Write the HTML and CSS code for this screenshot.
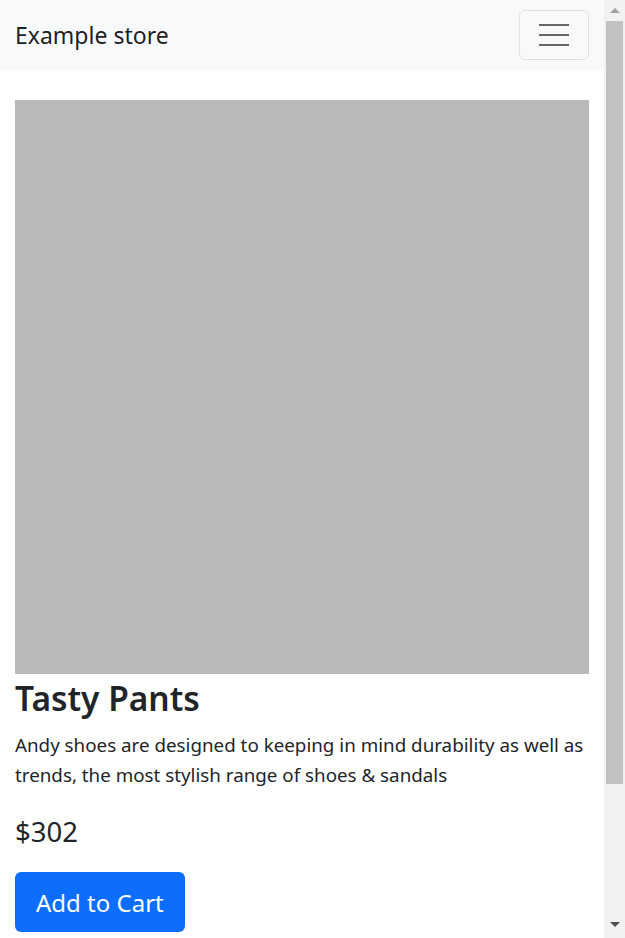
FILE: index.html
```html
<!DOCTYPE html>
<html lang="en">
<head>
  <meta charset="UTF-8" />
  <title>Example store</title>
  <meta name="viewport" content="width=device-width, initial-scale=1.0" />
  <link rel="stylesheet" href="styles.css">
</head>
<body>
  <nav class="navbar">
    <a class="brand" href="#">Example store</a>
    <button class="toggler" type="button" aria-label="Toggle navigation">
      <span class="toggler-icon"></span>
    </button>
  </nav>

  <main class="container">
    <div class="product-img"></div>
    <h1 class="title">Tasty Pants</h1>
    <p class="desc">Andy shoes are designed to keeping in mind durability as well as trends, the most stylish range of shoes &amp; sandals</p>
    <p class="price">$302</p>
    <button class="btn-cart" type="button">Add to Cart</button>
  </main>

  <!-- window scrollbar -->
  <div class="scrollbar" aria-hidden="true">
    <span class="arrow up"></span>
    <span class="thumb"></span>
    <span class="arrow down"></span>
  </div>
</body>
</html>
```

FILE: styles.css
```css
* {
  box-sizing: border-box;
}

body {
  margin: 0 21px 0 0;
  font-family: "Noto Sans", "Open Sans", sans-serif;
  color: #212529;
  background: #fff;
}

.navbar {
  display: flex;
  align-items: center;
  justify-content: space-between;
  height: 70px;
  padding: 0 15px;
  background-color: #f8f9fa;
}

.brand {
  font-size: 23px;
  color: rgba(0, 0, 0, 0.9);
  text-decoration: none;
}

.toggler {
  width: 70px;
  height: 50px;
  border: 1px solid rgba(0, 0, 0, 0.1);
  border-radius: 6px;
  background: transparent;
  display: flex;
  align-items: center;
  justify-content: center;
  padding: 0;
}

.toggler-icon {
  display: block;
  width: 30px;
  height: 22px;
  background:
    linear-gradient(#666, #666) 0 0 / 100% 2px no-repeat,
    linear-gradient(#666, #666) 0 10px / 100% 2px no-repeat,
    linear-gradient(#666, #666) 0 20px / 100% 2px no-repeat;
}

.container {
  padding: 30px 15px 175px;
}

.product-img {
  height: 574px;
  background: #bababa;
}

.title {
  margin: 4px 0 12px;
  font-size: 33.5px;
  font-weight: 600;
  line-height: 1.2;
}

.desc {
  margin: 0 0 21px;
  font-size: 18.8px;
  line-height: 30px;
}

.price {
  margin: 0 0 20px;
  font-size: 27.5px;
  line-height: 1.5;
}

.btn-cart {
  height: 60px;
  padding: 0 21px;
  border: none;
  border-radius: 6px;
  background-color: #0d6efd;
  color: #fff;
  font-family: inherit;
  font-size: 24px;
}

.scrollbar {
  position: fixed;
  top: 0;
  right: 0;
  bottom: 0;
  width: 21px;
  background: #f1f1f1;
}

.thumb {
  position: absolute;
  top: 21px;
  left: 2px;
  right: 2px;
  height: 763px;
  background: #c1c1c1;
}

.arrow {
  position: absolute;
  left: 6px;
  width: 0;
  height: 0;
  border-left: 5px solid transparent;
  border-right: 5px solid transparent;
}

.arrow.up {
  top: 8px;
  border-bottom: 5px solid #a3a3a3;
}

.arrow.down {
  bottom: 11px;
  border-top: 5px solid #505050;
}
```
